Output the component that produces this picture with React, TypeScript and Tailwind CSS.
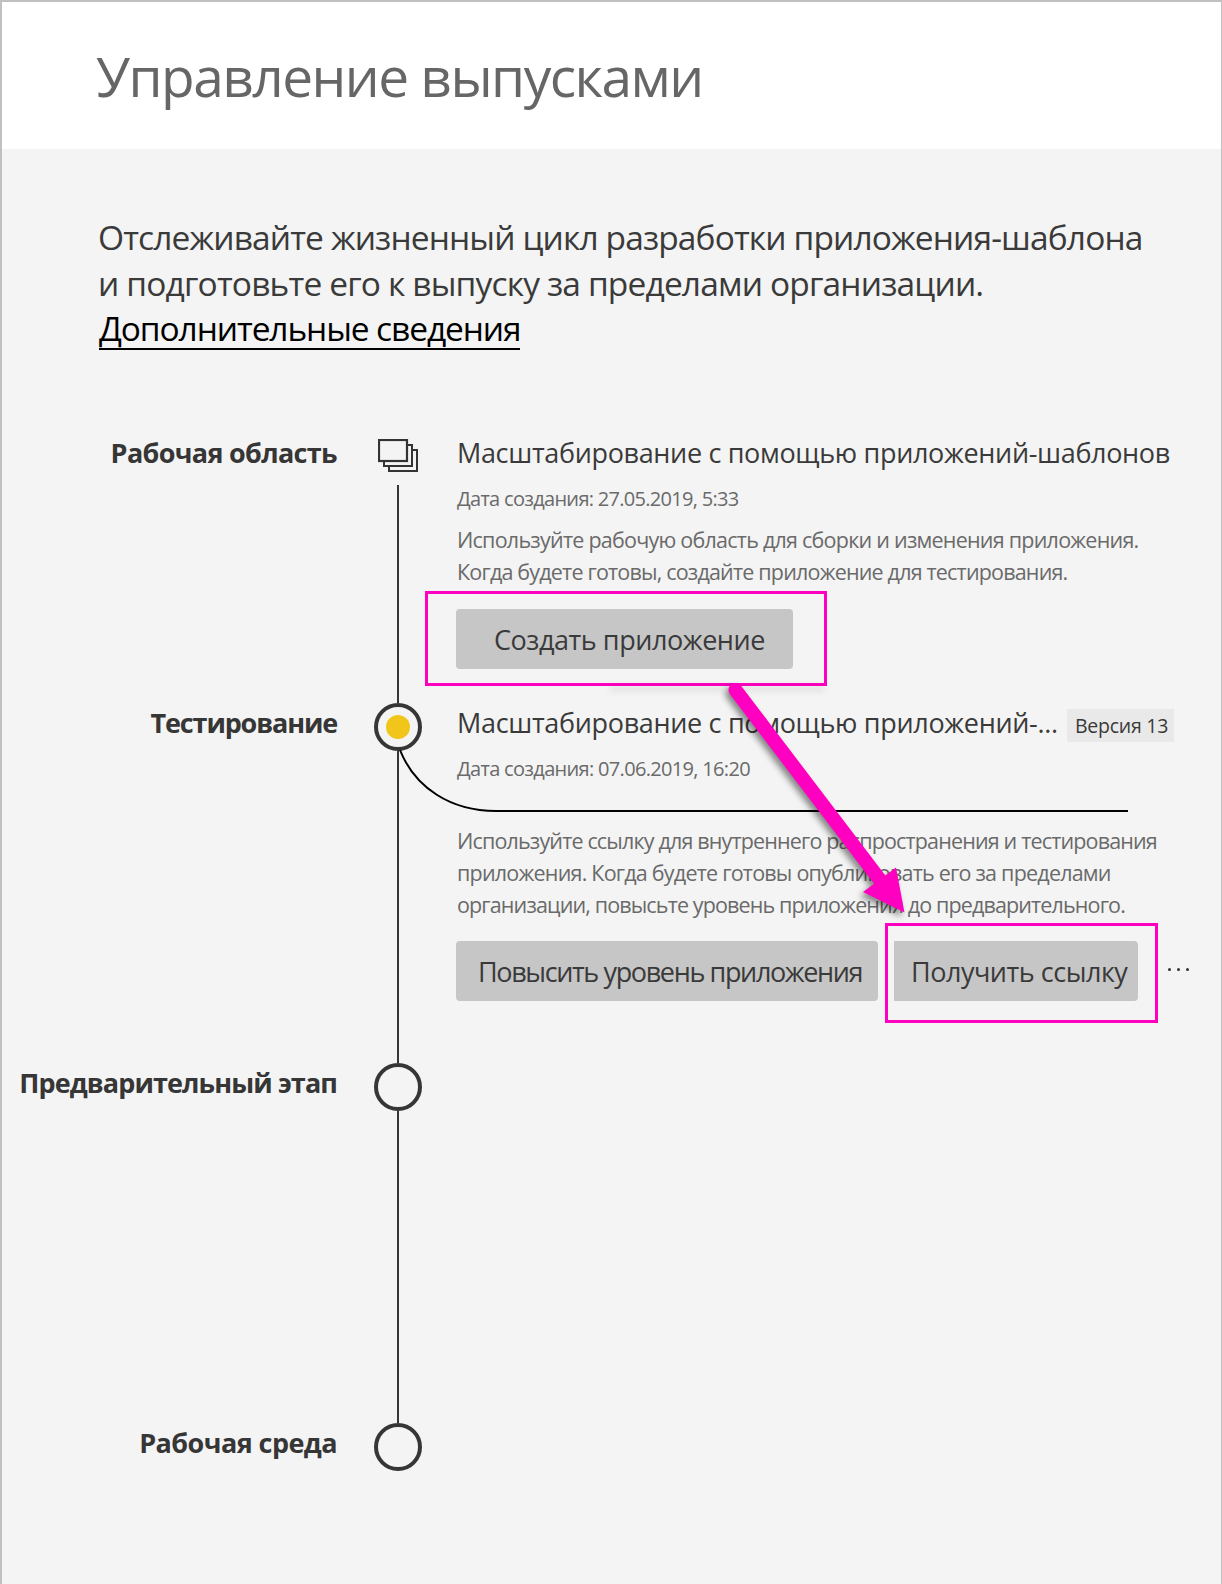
import type { ReactNode } from "react";

function StackIcon() {
  return (
    <svg width="41" height="34" viewBox="0 0 41 34" fill="none" stroke="#333" strokeWidth="2" className="shrink-0">
      <path d="M30 6H34V27H6V22" />
      <path d="M35 11H39V32H11V27" />
      <rect x="1" y="1" width="28" height="21" strokeWidth="2.2" />
    </svg>
  );
}

function Node({ active }: { active?: boolean }) {
  return (
    <div className="flex size-12 shrink-0 items-center justify-center rounded-full border-4 border-[#363636]">
      {active && <div className="size-6 rounded-full bg-[#f2c51b]" />}
    </div>
  );
}

function Stage({
  label,
  labelClass,
  marker,
  height,
  last,
  children,
}: {
  label: string;
  labelClass: string;
  marker: ReactNode;
  height: string;
  last?: boolean;
  children?: ReactNode;
}) {
  return (
    <section className={`relative flex ${height}`}>
      <h2 className={`w-[336px] shrink-0 pr-px whitespace-nowrap text-right text-[27px] leading-10 font-bold text-[#363636] ${labelClass}`}>
        {label}
      </h2>
      <div className="ml-9 flex w-12 shrink-0 flex-col items-center">
        {marker}
        {!last && <div className="w-0.5 flex-1 bg-[#363636]" />}
      </div>
      <div className="ml-[34px] whitespace-nowrap">{children}</div>
    </section>
  );
}

function Arrow() {
  return (
    <svg
      width="200"
      height="250"
      viewBox="0 0 200 250"
      className="pointer-events-none absolute top-[678px] left-[718px] z-10"
      style={{ filter: "drop-shadow(-3px 4px 3px rgba(0,0,0,0.45))" }}
    >
      <path d="M15.500 10L160 200" stroke="#ff00c0" strokeWidth="14" strokeLinecap="round" />
      <path d="M184.500 232.500L143 212L176 187.500Z" fill="#ff00c0" />
    </svg>
  );
}

export default function App() {
  return (
    <main className="relative h-[1584px] w-[1222px] overflow-hidden border-t-2 border-r border-l-2 border-[#c0c0c0] bg-[#f4f4f4] font-['Open_Sans','Noto_Sans',sans-serif]">
      <header className="flex h-[147px] items-start bg-white pl-[94px]">
        <h1 className="mt-[38px] text-[55px] leading-[72px] tracking-[-1.53px] whitespace-nowrap text-[#666]">
          Управление выпусками
        </h1>
      </header>

      <div className="pt-[66px] pl-[96px] text-[33.5px] leading-[45px] whitespace-nowrap text-[#3a3a3a]">
        <p className="tracking-[-0.87px]">Отслеживайте жизненный цикл разработки приложения-шаблона</p>
        <p className="mt-px tracking-[-0.84px]">и подготовьте его к выпуску за пределами организации.</p>
        <a className="relative ml-px inline-block tracking-[-1.1px] text-black">
          Дополнительные сведения
          <span className="absolute bottom-px left-0 h-0.5 w-[421px] bg-black" />
        </a>
      </div>

      <div className="mt-[82px]">
        <Stage
          label="Рабочая область"
          labelClass="tracking-[-0.67px]"
          height="h-[270px]"
          marker={
            <div className="h-[52px] shrink-0 pt-1.5">
              <StackIcon />
            </div>
          }
        >
          <h3 className="pl-px text-[27px] leading-10 tracking-[-0.34px] text-[#3a3a3a]">
            Масштабирование с помощью приложений-шаблонов
          </h3>
          <p className="mt-2.5 pl-px text-[20px] leading-[31px] tracking-[-0.7px] text-[#6a6a6a]">Дата создания: 27.05.2019, 5:33</p>
          <div className="mt-2.5 pl-px text-[21.5px] leading-8 text-[#6a6a6a]">
            <p className="tracking-[-0.76px]">Используйте рабочую область для сборки и изменения приложения.</p>
            <p className="tracking-[-0.81px]">Когда будете готовы, создайте приложение для тестирования.</p>
          </div>
          <div className="relative mt-[21px] w-[337px]">
            <button className="block h-[60px] w-full rounded bg-[#c6c6c6] pt-px pl-[38px] text-left text-[27px] leading-[60px] tracking-[-0.45px] text-[#3a3a3a]">
              Создать приложение
            </button>
            <div className="absolute -top-[18px] -left-[31px] h-[95px] w-[402px] border-3 border-[#ff00c0]" />
            <div className="absolute top-[78px] left-[154px] h-1 w-[214px] bg-black/10 blur-[3px]" />
          </div>
        </Stage>

        <Stage label="Тестирование" labelClass="tracking-[-1.15px]" height="h-[360px]" marker={<Node active />}>
          <svg width="758" height="64" viewBox="0 0 758 64" fill="none" className="absolute top-[46px] left-[396px]">
            <path d="M2 1C17 39 53 62 98 62H730" stroke="#000" strokeWidth="2" />
          </svg>
          <div className="flex items-start">
            <h3 className="w-[611px] pl-px text-[27px] leading-10 tracking-[-0.33px] text-[#3a3a3a]">
              Масштабирование с помощью приложений-...
            </h3>
            <span className="mt-1.5 h-[33px] w-[107px] bg-[#e9e9e9] pl-2 text-[19.5px] leading-[33px] tracking-[-0.25px] text-[#3a3a3a]">
              Версия 13
            </span>
          </div>
          <p className="mt-2.5 pl-px text-[20px] leading-[31px] tracking-[-0.68px] text-[#6a6a6a]">Дата создания: 07.06.2019, 16:20</p>
          <div className="mt-[41px] pl-px text-[21.5px] leading-8 text-[#6a6a6a]">
            <p className="tracking-[-0.84px]">Используйте ссылку для внутреннего распространения и тестирования</p>
            <p className="tracking-[-0.78px]">приложения. Когда будете готовы опубликовать его за пределами</p>
            <p className="tracking-[-0.86px]">организации, повысьте уровень приложения до предварительного.</p>
          </div>
          <div className="mt-5 flex">
            <button className="h-[60px] w-[422px] rounded bg-[#c6c6c6] pt-0.5 pl-[22px] text-left text-[27px] leading-[58px] tracking-[-1.37px] text-[#3a3a3a]">
              Повысить уровень приложения
            </button>
            <div className="relative ml-4">
              <button className="block h-[60px] w-[244px] rounded-r bg-[#c6c6c6] pt-0.5 pl-[17px] text-left text-[27px] leading-[58px] tracking-[-0.48px] text-[#3a3a3a]">
                Получить ссылку
              </button>
              <div className="absolute -top-[18px] -left-[9px] h-[100px] w-[273px] border-3 border-[#ff00c0]" />
            </div>
            <div className="mt-[27px] ml-[30px] flex gap-[6px]">
              <span className="size-[3px] rounded-full bg-[#333]" />
              <span className="size-[3px] rounded-full bg-[#333]" />
              <span className="size-[3px] rounded-full bg-[#333]" />
            </div>
          </div>
        </Stage>

        <Stage label="Предварительный этап" labelClass="tracking-[-0.9px]" height="h-[360px]" marker={<Node />} />
        <Stage label="Рабочая среда" labelClass="tracking-[-0.55px]" height="h-[120px]" marker={<Node />} last />
      </div>

      <Arrow />
    </main>
  );
}
